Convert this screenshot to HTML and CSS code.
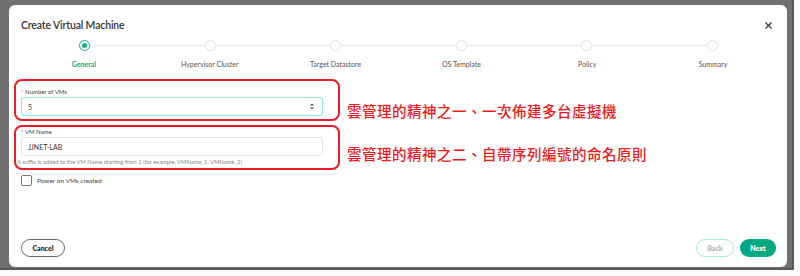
FILE: index.html
```html
<!DOCTYPE html>
<html lang="zh-Hant">
<head>
    <meta charset="UTF-8">
    <meta name="viewport" content="width=device-width, initial-scale=1.0">
    <title>Create Virtual Machine</title>
    <link rel="stylesheet" href="styles.css">
</head>
<body>
    <div class="backdrop">
        <div class="modal">
            <div class="modal-header">
                <h1>Create Virtual Machine</h1>
                <span class="close">
                    <svg width="7" height="7" viewBox="0 0 7 7"><path d="M0.5 0.5 L6.5 6.5 M6.5 0.5 L0.5 6.5" stroke="#333" stroke-width="1.2"/></svg>
                </span>
            </div>
            <div class="stepper">
                <div class="step-track">
                    <span class="dot active"></span><span class="line"></span>
                    <span class="dot"></span><span class="line"></span>
                    <span class="dot"></span><span class="line"></span>
                    <span class="dot"></span><span class="line"></span>
                    <span class="dot"></span><span class="line"></span>
                    <span class="dot"></span>
                </div>
                <div class="step-labels">
                    <span class="active">General</span>
                    <span>Hypervisor Cluster</span>
                    <span>Target Datastore</span>
                    <span>OS Template</span>
                    <span>Policy</span>
                    <span>Summary</span>
                </div>
            </div>
            <div class="form">
                <div class="row">
                    <div class="field-box first">
                        <label><span class="req">*</span> Number of VMs</label>
                        <div class="input focused">
                            <span>5</span>
                            <span class="spin">
                                <svg width="4" height="7" viewBox="0 0 4 7"><path d="M0 2.6 L2 0.6 L4 2.6 Z M0 4.4 L2 6.4 L4 4.4 Z" fill="#444"/></svg>
                            </span>
                        </div>
                    </div>
                    <p class="note note-1">雲管理的精神之一、一次佈建多台虛擬機</p>
                </div>
                <div class="row">
                    <div class="field-box second">
                        <label><span class="req">*</span> VM Name</label>
                        <div class="input"><span>JJNET-LAB</span></div>
                        <div class="help">A suffix is added to the VM Name starting from 1 (for example, VMName_1, VMName_2)</div>
                    </div>
                    <p class="note note-2">雲管理的精神之二、自帶序列編號的命名原則</p>
                </div>
                <div class="check">
                    <span class="box"></span>
                    <span>Power on VMs created</span>
                </div>
            </div>
            <div class="modal-footer">
                <button class="btn cancel">Cancel</button>
                <div class="actions">
                    <button class="btn back">Back</button>
                    <button class="btn next">Next</button>
                </div>
            </div>
        </div>
    </div>
</body>
</html>
```

FILE: styles.css
```css
body {
    margin: 0;
    background: #fbfbfb;
    font-family: Lato, 'Open Sans', Arial, sans-serif;
    color: #333;
}
.backdrop {
    width: 794px;
    height: 270px;
    background: #707070;
    padding: 5px 0 0 9px;
    box-sizing: border-box;
    border-right: 2px solid #5a5a5a;
    border-bottom: 2px solid #5a5a5a;
}
.modal {
    width: 778px;
    height: 262px;
    background: #fff;
    border-radius: 6px;
    box-sizing: border-box;
    padding: 0 11px 10px 12px;
    display: flex;
    flex-direction: column;
}
.modal-header {
    display: flex;
    justify-content: space-between;
    align-items: center;
    padding-top: 12px;
    height: 15px;
}
h1 {
    margin: 0;
    font-size: 10.5px;
    font-weight: 600;
    color: #333;
    letter-spacing: -0.15px;
}
.close {
    display: flex;
    margin-right: 4px;
    margin-top: 2px;
}
.stepper {
    margin-top: 8px;
    width: 755px;
}
.step-track {
    display: flex;
    align-items: center;
    padding: 0 58px;
    height: 11px;
}
.dot {
    width: 9px;
    height: 9px;
    border: 1px solid #dce3e8;
    border-radius: 50%;
    background: #fff;
    flex: none;
    box-sizing: content-box;
}
.dot.active {
    border: 1.3px solid #17b08c;
    display: flex;
    align-items: center;
    justify-content: center;
}
.dot.active::after {
    content: '';
    width: 5px;
    height: 5px;
    border-radius: 50%;
    background: #17b08c;
}
.line {
    flex: 1;
    height: 1px;
    background: #e3e9ee;
}
.step-labels {
    display: grid;
    grid-template-columns: repeat(6, 1fr);
    text-align: center;
    margin-top: 9px;
    font-size: 7px;
    color: #555;
}
.step-labels .active {
    color: #17a583;
    font-weight: bold;
}
.form {
    margin-top: 11px;
    margin-left: -7px;
}
.row {
    display: flex;
    align-items: flex-start;
}
.field-box {
    width: 326px;
    box-sizing: border-box;
    border: 2px solid #ea1c24;
    border-radius: 8px;
    padding: 7px 15px 0 5px;
}
.field-box.first {
    height: 42px;
}
.field-box.second {
    height: 45px;
    margin-top: 4px;
    padding-top: 1px;
}
label {
    display: block;
    font-size: 6px;
    color: #444;
    line-height: 7px;
}
.req {
    color: #e5323a;
}
.input {
    margin-top: 2px;
    height: 19px;
    box-sizing: border-box;
    border: 1px solid #e6e6e6;
    border-radius: 3px;
    display: flex;
    align-items: center;
    justify-content: space-between;
    padding: 0 6px 0 6px;
    font-size: 7px;
    color: #333;
}
.input.focused {
    border: 1.5px solid #8fe3d9;
}
.spin {
    display: flex;
    margin-right: 2px;
}
.help {
    margin-top: 2px;
    margin-left: -4px;
    font-size: 5.8px;
    color: #888;
    white-space: nowrap;
}
.note {
    margin: 0 0 0 7px;
    font-family: 'Noto Sans CJK TC', 'Noto Sans CJK SC', sans-serif;
    font-size: 14.5px;
    font-weight: 500;
    color: #ea1a20;
    line-height: 20px;
    letter-spacing: 0.5px;
}
.note-1 {
    margin-top: 22px;
}
.note-2 {
    margin-top: 23px;
}
.check {
    display: flex;
    align-items: center;
    gap: 5px;
    margin: 5px 0 0 7px;
    font-size: 6.5px;
    color: #444;
}
.check .box {
    width: 9px;
    height: 9px;
    border: 1.3px solid #777;
    border-radius: 2px;
}
.modal-footer {
    margin-top: auto;
    display: flex;
    justify-content: space-between;
    align-items: center;
}
.actions {
    display: flex;
    gap: 6px;
}
.btn {
    height: 18px;
    border-radius: 9px;
    font-family: inherit;
    font-size: 7px;
    font-weight: 800;
    padding: 0;
    background: #fff;
    box-sizing: border-box;
}
.cancel {
    width: 44px;
    border: 1.3px solid #6a6a6a;
    color: #333;
}
.back {
    width: 38px;
    border: 1.3px solid #a9e8dd;
    color: #b9b9b9;
}
.next {
    width: 36px;
    border: none;
    background: #01a982;
    color: #fff;
}
```
